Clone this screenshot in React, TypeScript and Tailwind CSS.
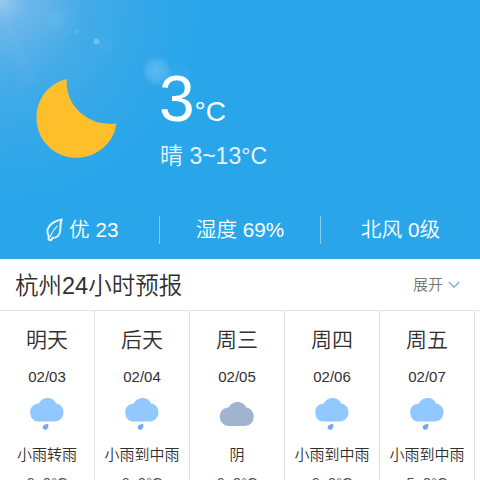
const days = [
  { name: '明天', date: '02/03', rain: true, text: '小雨转雨', temp: '6~9°C' },
  { name: '后天', date: '02/04', rain: true, text: '小雨到中雨', temp: '6~9°C' },
  { name: '周三', date: '02/05', rain: false, text: '阴', temp: '6~9°C' },
  { name: '周四', date: '02/06', rain: true, text: '小雨到中雨', temp: '6~9°C' },
  { name: '周五', date: '02/07', rain: true, text: '小雨到中雨', temp: '5~9°C' },
];

function Cloud({ rain }: { rain: boolean }) {
  return (
    <svg width="36" height="34" viewBox="0 0 36 34" className="shrink-0">
      <g transform={rain ? 'translate(1 0)' : 'translate(0.6 3.9) scale(1.02)'} fill={rain ? '#91c8ff' : '#a0b4d0'}>
        <path d="M8.8 5.6C10.4 2.1 13.9 0 17.7 0s7.1 2.1 8.4 5.5c4.2.5 7.4 4.2 7.4 8.8 0 5.3-3.8 9.3-9 9.3H9C3.8 23.6.2 19.5.2 14.4c0-4.9 3.7-8.8 8.6-8.8Z" />
      </g>
      {rain && <path d="M19.2 25.7c.6 2.5-.2 6.1-2.9 6.1-1.7 0-2.9-1.2-2.7-2.8.3-1.9 2.7-3 5.6-3.3Z" fill="#77a9ef" />}
    </svg>
  );
}

function Glows() {
  return (
    <svg className="absolute inset-0" width="480" height="259" viewBox="0 0 480 259">
      <defs>
        <radialGradient id="sun" gradientUnits="userSpaceOnUse" cx="0" cy="0" r="200">
          <stop offset="0" stopColor="#9bc9f0" />
          <stop offset="0.13" stopColor="#83bdeb" stopOpacity="0.75" />
          <stop offset="0.45" stopColor="#6bb2e3" stopOpacity="0.38" />
          <stop offset="1" stopColor="#58afe4" stopOpacity="0" />
        </radialGradient>
        <radialGradient id="orb">
          <stop offset="0" stopColor="#74c6f5" stopOpacity="0.65" />
          <stop offset="0.65" stopColor="#65bdf1" stopOpacity="0.5" />
          <stop offset="1" stopColor="#54b6ef" stopOpacity="0" />
        </radialGradient>
      </defs>
      <rect width="220" height="220" fill="url(#sun)" />
      <path d="M0 0 38 82 22 88Z" fill="#fff" opacity="0.025" />
      <circle cx="55" cy="20" r="21" fill="#fff" opacity="0.02" />
      <circle cx="55" cy="20" r="12" fill="url(#orb)" opacity="0.55" />
      <circle cx="76.5" cy="31.5" r="4" fill="url(#orb)" opacity="0.6" />
      <circle cx="96.5" cy="41.5" r="3" fill="#78caf6" opacity="0.75" />
      <circle cx="106" cy="45" r="7.5" fill="#58b5ed" opacity="0.2" />
      <circle cx="157" cy="71" r="15.5" fill="url(#orb)" />
      <circle cx="178" cy="76" r="12" fill="#65bdf1" opacity="0.12" />
    </svg>
  );
}

export default function App() {
  return (
    <main className="h-[480px] w-[480px] overflow-hidden bg-white font-['Liberation_Sans','Noto_Sans_CJK_SC',sans-serif] font-[350] text-[#303030]">
      <section className="relative h-[259px] bg-[#29a6ea] text-white">
        <Glows />
        <div className="relative flex h-[200px] pl-9">
          <svg width="82" height="82" viewBox="0 0 82 82" className="mt-[78px] shrink-0">
            <path d="M30.7 1.1C12.6 5.3.5 21.5.5 39.7c0 22.2 17.7 40.1 40 40.1 20.2 0 37.4-14.5 39.8-34.2C52.6 48.8 28.9 28.5 30.7 1.1Z" fill="#ffbf2b" />
          </svg>
          <div className="ml-[41px] pt-[67px]">
            <div className="flex h-16 items-baseline leading-[64px]">
              <span className="text-[64px]">3</span>
              <span className="text-[28px]">°C</span>
            </div>
            <div className="mt-[9px] ml-px whitespace-nowrap text-[23px] leading-8 text-[#e4f5ff]">晴 3~13°C</div>
          </div>
        </div>
        <div className="relative flex h-[59px] items-center text-[20.7px]">
          <div className="flex h-7 w-[159px] items-center pl-[46px]">
            <svg width="18" height="24" viewBox="0 0 18 24" fill="none" stroke="#e3f6ff" strokeWidth="2" strokeLinecap="round" strokeLinejoin="round">
              <path d="M15.7 1.5C10 2.5 3.8 5.8 1.8 11c-1.3 3.4.4 5.5 1.1 7.4l-.4 3.2 2.7.6 1.1-2.1c4.6-.2 7.4-2.8 7.9-7.1.3-3.9-.3-7.2 1.5-11.5Z" />
              <path d="M4.2 18.5c1.9-4.3 4-7.6 6.9-10.3" strokeWidth="1.1" />
            </svg>
            <span className="ml-[5px] whitespace-nowrap">优 23</span>
          </div>
          <div className="flex h-7 w-[162px] items-center justify-center border-x border-[#83cdf4] whitespace-nowrap">湿度 69%</div>
          <div className="flex h-7 flex-1 items-center justify-center whitespace-nowrap">北风 0级</div>
        </div>
      </section>
      <header className="flex h-[52px] items-center justify-between border-b border-[#e4e4e4] pr-5 pl-[15px]">
        <h1 className="pt-1 text-[23.5px] font-[350]">杭州24小时预报</h1>
        <div className="flex items-center gap-[5px] pt-px text-[15px] text-[#777]">
          <span>展开</span>
          <svg width="12" height="8" viewBox="0 0 12 8" fill="none" stroke="#79b4e7" strokeWidth="1.5">
            <path d="m.7 1 5.3 5.3L11.3 1" />
          </svg>
        </div>
      </header>
      <section className="flex h-[169px] overflow-hidden">
        {days.map((day) => (
          <article key={day.date} className="flex h-[200px] w-[95px] shrink-0 flex-col items-center border-r border-[#e0e0e0] whitespace-nowrap">
            <h2 className="mt-[13px] text-[21px] leading-8 font-[350]">{day.name}</h2>
            <div className="mt-[10px] text-[15px] leading-[22px]">{day.date}</div>
            <div className="mt-[10px] h-[34px]"><Cloud rain={day.rain} /></div>
            <div className="mt-[11px] text-[15px] leading-[24px]">{day.text}</div>
            <div className="mt-[7px] text-[14.5px] leading-[18px] text-[#505050]">{day.temp}</div>
          </article>
        ))}
      </section>
    </main>
  );
}
